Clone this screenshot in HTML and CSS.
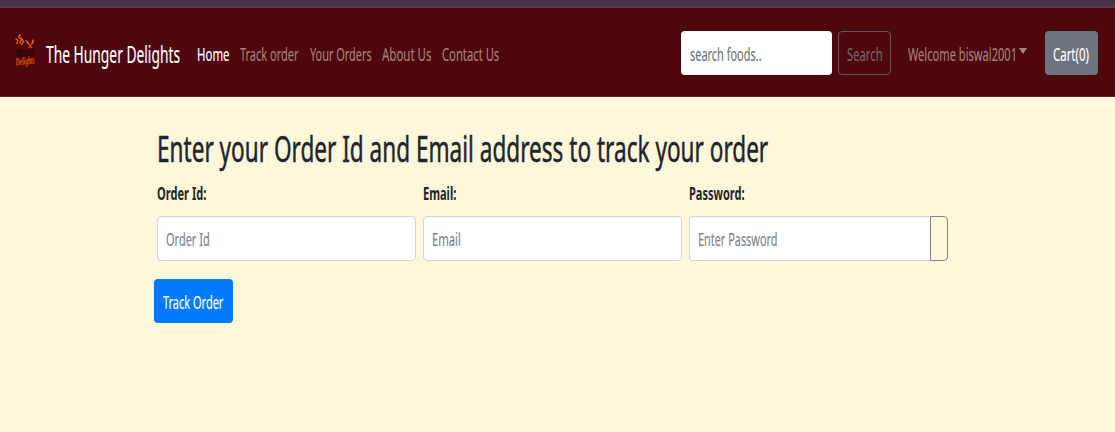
FILE: index.html
```html
<!DOCTYPE html>
<html lang="en">
<head>
<meta charset="utf-8">
<title>The Hunger Delights</title>
<link rel="stylesheet" href="styles.css">
</head>
<body>
<div class="topstrip"></div>
<nav class="navbar">
  <svg class="logo" viewBox="0 0 24 40" fill="none">
    <path d="M1.500 7.500L4 9.500 2.500 13M6.500 3L4.500 6l3 2.500L5.500 13M7 6.500l2.500 4L7.500 14" stroke="#e2590c" stroke-width="1.400"/>
    <path d="M13 11l5 6M18.500 11l-4 6" stroke="#d9540c" stroke-width="1.200"/>
    <path d="M11.500 9l2.500 1 1 3-2-.5zM18 9.500l1-1.500 1 1-.5 3.500-1.500 1z" fill="#e2590c"/>
    <path d="M2 19q4-2 7 0t6-1l6 1-1 6q-5-1-9 1t-8-1z" fill="#390508"/>
    <text class="logo-word" x="2" y="34.500" textLength="19" lengthAdjust="spacingAndGlyphs" transform="rotate(-6 2 34)">Delights</text>
  </svg>
  <a class="fit brand"><span>The Hunger Delights</span></a>
  <div class="links">
    <a class="fit home"><span>Home</span></a>
    <a class="fit track"><span>Track order</span></a>
    <a class="fit orders"><span>Your Orders</span></a>
    <a class="fit about"><span>About Us</span></a>
    <a class="fit contact"><span>Contact Us</span></a>
  </div>
  <div class="search-box"><span class="fit ph-search"><span>search foods..</span></span></div>
  <div class="search-btn"><span class="fit search"><span>Search</span></span></div>
  <div class="user"><span class="fit welcome"><span>Welcome biswal2001</span></span><i class="caret"></i></div>
  <div class="cart-btn"><span class="fit cart"><span>Cart(0)</span></span></div>
</nav>
<main class="content">
  <h1 class="fit title"><span>Enter your Order Id and Email address to track your order</span></h1>
  <div class="fields">
    <div class="field">
      <label class="fit l-order"><span>Order Id:</span></label>
      <div class="input"><span class="fit ph-order"><span>Order Id</span></span></div>
    </div>
    <div class="field">
      <label class="fit l-email"><span>Email:</span></label>
      <div class="input"><span class="fit ph-email"><span>Email</span></span></div>
    </div>
    <div class="field">
      <label class="fit l-pass"><span>Password:</span></label>
      <div class="group">
        <div class="input joined"><span class="fit ph-pass"><span>Enter Password</span></span></div>
        <div class="toggle"></div>
      </div>
    </div>
  </div>
  <div class="submit"><span class="fit t-order"><span>Track Order</span></span></div>
</main>
</body>
</html>
```

FILE: styles.css
```css
* { box-sizing: border-box; }
body {
  margin: 0;
  height: 432px;
  overflow: hidden;
  background: #fff7dc;
  color: #212529;
  font: 18px/28px "Noto Sans", "Open Sans", sans-serif;
}

/* Condensed text: box has the final width, inner span is squeezed into it */
.fit { display: block; flex: none; white-space: nowrap; margin: 0; }
.fit > span {
  display: inline-block;
  transform: scaleX(var(--s));
  transform-origin: 0 50%;
  -webkit-text-stroke: .15px currentColor;
}

.topstrip { height: 8px; background: #4b3647; border-bottom: 1px solid #4e4146; }
.navbar {
  height: 89px;
  display: flex;
  align-items: center;
  padding: 1px 17px 0 14px;
  background: #4d070d;
  border-bottom: 1px solid #6a2a2b;
  color: #a6807d;
}
.logo { width: 24px; height: 40px; flex: none; margin: -3px 8px 0 0; overflow: visible; }
.logo-word { font: italic bold 11px "Liberation Serif", serif; fill: #e2590c; }
.brand { width: 151px; --s: .6; font-size: 23px; line-height: 32px; color: #fff; padding-top: 2px; }
.links { display: flex; width: 484px; padding-top: 2px; }
.home { width: 43px; --s: .635; color: #fff; }
.track { width: 70px; --s: .61; }
.orders { width: 72px; --s: .605; }
.about { width: 60px; --s: .637; }
.contact { width: 60px; --s: .625; }

.search-box, .search-btn, .cart-btn {
  height: 44px;
  display: flex;
  align-items: center;
  flex: none;
  border-radius: 4px;
}
.search-box { width: 151px; padding: 2px 0 0 9px; background: #fff; color: #6c757d; margin: 0 6px 0 0; }
.ph-search { width: 75px; --s: .608; }
.search-btn { width: 53px; padding: 2px 0 0 8px; border: 1px solid #635357; color: #76646a; }
.search { width: 38px; --s: .625; }
.user { display: flex; align-items: center; width: 137px; margin-left: 17px; padding-top: 2px; }
.welcome { width: 111px; --s: .617; }
.caret { border: 4px solid transparent; border-top: 6px solid #a6837f; border-bottom: 0; margin-top: -5px; }
.cart-btn { width: 53px; padding: 2px 0 0 8px; background: #6c757d; color: #fff; }
.cart { width: 37px; --s: .635; }

.content { padding: 25px 0 0 154px; }
.title { height: 54px; width: 612px; margin-left: 3px; font-size: 36px; font-weight: 400; line-height: 54px; --s: .627; }
.title > span { -webkit-text-stroke-width: .5px; }
.fields { display: flex; gap: 7px; margin: 3px 0 0 3.400px; }
.field { width: 259px; }
.field label { font-weight: 700; height: 37px; }
.field label > span { -webkit-text-stroke-width: 0; }
.l-order { --s: .615; }
.l-email { --s: .615; }
.l-pass { --s: .612; }
.input {
  height: 45px;
  display: flex;
  align-items: center;
  padding: 1px 0 0 8px;
  border: 1px solid #d2d5d8;
  border-radius: 4px;
  background: #fff;
  color: #7c848b;
}
.ph-order { --s: .61; }
.ph-email { --s: .625; }
.ph-pass { --s: .605; }
.group { display: flex; }
.joined { width: 241px; border-right: 0; border-radius: 4px 0 0 4px; }
.toggle { width: 18px; border: 1px solid #7f858a; border-radius: 0 4px 4px 0; }
.submit {
  display: flex;
  align-items: center;
  width: 79px;
  height: 44px;
  margin-top: 18px;
  padding: 1px 0 0 9px;
  border-radius: 4px;
  background: #007bff;
  color: #fff;
}
.t-order { --s: .61; }
```
